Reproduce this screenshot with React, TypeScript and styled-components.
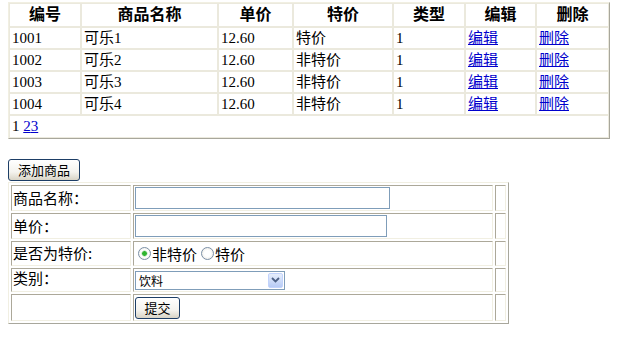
import React from 'react';
import styled, { createGlobalStyle, css } from 'styled-components';

const GlobalStyle = createGlobalStyle`
  body {
    margin: 0;
    background: #ffffff;
    font-family: 'Liberation Serif', 'Noto Sans CJK SC', serif;
    color: #000000;
  }
`;

const Page = styled.div`
  display: flex;
  flex-direction: column;
  align-items: flex-start;
  padding: 2px 8px 0;
`;

const GoodsTable = styled.table`
  width: 600px;
  table-layout: fixed;
  border-collapse: separate;
  border-spacing: 0;
  border: 1px solid;
  border-color: #f1efe2 #a8a79c #a8a79c #f1efe2;
  font-size: 15px;
`;

const HeadCell = styled.th`
  height: 22px;
  padding: 0;
  border: 1px solid #ebe9dd;
  font-size: 16px;
  line-height: 20px;
  font-weight: bold;
  text-align: center;
  overflow: hidden;
`;

const Cell = styled.td`
  height: 20px;
  padding: 0 0 0 2px;
  border: 1px solid #ebe9dd;
  line-height: 19px;
  text-align: left;
  white-space: nowrap;
  overflow: hidden;
`;

const PagerCell = styled(Cell)`
  height: 21px;
`;

const Link = styled.a`
  color: #0000cc;
  text-decoration: underline;
  cursor: pointer;
`;

const Spacer = styled.div`
  height: 20px;
`;

const XpButton = styled.button<{ w: number }>`
  width: ${p => p.w}px;
  height: 22px;
  padding: 0;
  border: 1px solid #1d3e66;
  border-radius: 3px;
  background: linear-gradient(to bottom, #ffffff 0%, #f4f3ee 60%, #d8d4c6 100%);
  font-family: 'Noto Sans CJK SC', sans-serif;
  font-size: 13px;
  line-height: 18px;
  color: #000000;
`;

const FormTable = styled.table`
  width: 500px;
  margin-top: 1px;
  table-layout: fixed;
  border-collapse: separate;
  border-spacing: 2px;
  border: 1px solid;
  border-color: #f1efe2 #a8a79c #a8a79c #f1efe2;
  font-size: 15px;
`;

const FormRow = styled.tr<{ h: number }>`
  height: ${p => p.h}px;
`;

const FormCell = styled.td<{ $top?: boolean }>`
  padding: 0 1px;
  border: 1px solid;
  border-color: #aca899 #f1efe2 #f1efe2 #aca899;
  line-height: 18px;
  vertical-align: middle;
  white-space: nowrap;
  ${p =>
    p.$top &&
    css`
      vertical-align: top;
    `}
`;

const Label = styled.span`
  font-family: 'Noto Sans CJK SC', sans-serif;
  font-size: 15px;
  line-height: 18px;
`;

const TextInput = styled.input<{ w: number }>`
  display: block;
  box-sizing: border-box;
  width: ${p => p.w}px;
  height: 22px;
  margin: 0;
  border: 1px solid #7f9db9;
  padding: 0 2px;
  background: #ffffff;
`;

const RadioGroup = styled.div`
  display: flex;
  align-items: center;
  padding-left: 3px;
  font-family: 'Noto Sans CJK SC', sans-serif;
  font-size: 15px;
  line-height: 18px;
`;

const Radio = styled.span<{ checked?: boolean }>`
  box-sizing: border-box;
  width: 13px;
  height: 13px;
  margin: 0 1px 0 ${p => (p.checked ? 0 : 4)}px;
  border: 1px solid #7b8fa6;
  border-radius: 50%;
  background: ${p =>
    p.checked
      ? 'radial-gradient(circle, #2fb52f 0 2px, #a8dca8 2.5px, #ffffff 3.5px, #eceae2 100%)'
      : 'radial-gradient(circle, #ffffff 0 3px, #e4e2da 100%)'};
`;

const SelectBox = styled.div`
  display: flex;
  align-items: center;
  box-sizing: border-box;
  width: 150px;
  height: 19px;
  border: 1px solid #7f9db9;
  background: #ffffff;
`;

const SelectText = styled.span`
  flex: 1;
  padding-left: 3px;
  font-family: 'Noto Sans CJK SC', sans-serif;
  font-size: 12px;
  line-height: 17px;
`;

const SelectArrow = styled.span`
  display: flex;
  align-items: center;
  justify-content: center;
  width: 15px;
  height: 15px;
  margin-right: 1px;
  border: 1px solid #c2d3fc;
  border-radius: 2px;
  box-sizing: border-box;
  background: linear-gradient(to bottom, #e6eefc, #b7cbf5);
`;

const rows = [
  { id: '1001', name: '可乐1', price: '12.60', special: '特价', type: '1' },
  { id: '1002', name: '可乐2', price: '12.60', special: '非特价', type: '1' },
  { id: '1003', name: '可乐3', price: '12.60', special: '非特价', type: '1' },
  { id: '1004', name: '可乐4', price: '12.60', special: '非特价', type: '1' }
];

const colWidths = [72, 137, 75, 100, 72, 71, 73];
const headers = ['编号', '商品名称', '单价', '特价', '类型', '编辑', '删除'];

const App: React.FC = () => {
  return (
    <>
      <GlobalStyle />
      <Page>
        <GoodsTable>
          <colgroup>
            {colWidths.map((w, i) => (
              <col key={i} style={{ width: w }} />
            ))}
          </colgroup>
          <thead>
            <tr>
              {headers.map(h => (
                <HeadCell key={h}>{h}</HeadCell>
              ))}
            </tr>
          </thead>
          <tbody>
            {rows.map(r => (
              <tr key={r.id}>
                <Cell>{r.id}</Cell>
                <Cell>{r.name}</Cell>
                <Cell>{r.price}</Cell>
                <Cell>{r.special}</Cell>
                <Cell>{r.type}</Cell>
                <Cell>
                  <Link>编辑</Link>
                </Cell>
                <Cell>
                  <Link>删除</Link>
                </Cell>
              </tr>
            ))}
            <tr>
              <PagerCell colSpan={7}>
                1 <Link>2</Link>
                <Link>3</Link>
              </PagerCell>
            </tr>
          </tbody>
        </GoodsTable>

        <Spacer />
        <XpButton w={72}>添加商品</XpButton>

        <FormTable>
          <colgroup>
            <col style={{ width: 120 }} />
            <col style={{ width: 360 }} />
            <col style={{ width: 11 }} />
          </colgroup>
          <tbody>
            <FormRow h={26}>
              <FormCell>
                <Label>商品名称：</Label>
              </FormCell>
              <FormCell>
                <TextInput w={255} />
              </FormCell>
              <FormCell />
            </FormRow>
            <FormRow h={26}>
              <FormCell>
                <Label>单价：</Label>
              </FormCell>
              <FormCell>
                <TextInput w={252} />
              </FormCell>
              <FormCell />
            </FormRow>
            <FormRow h={25}>
              <FormCell>
                <Label>是否为特价:</Label>
              </FormCell>
              <FormCell>
                <RadioGroup>
                  <Radio checked />
                  非特价
                  <Radio />
                  特价
                </RadioGroup>
              </FormCell>
              <FormCell />
            </FormRow>
            <FormRow h={24}>
              <FormCell $top>
                <Label>类别：</Label>
              </FormCell>
              <FormCell>
                <SelectBox>
                  <SelectText>饮料</SelectText>
                  <SelectArrow>
                    <svg width="9" height="6" viewBox="0 0 9 6">
                      <path d="M1 1 L4.5 4.5 L8 1" fill="none" stroke="#4d6185" strokeWidth="1.8" />
                    </svg>
                  </SelectArrow>
                </SelectBox>
              </FormCell>
              <FormCell />
            </FormRow>
            <FormRow h={27}>
              <FormCell />
              <FormCell>
                <XpButton w={45}>提交</XpButton>
              </FormCell>
              <FormCell />
            </FormRow>
          </tbody>
        </FormTable>
      </Page>
    </>
  );
};

export default App;
